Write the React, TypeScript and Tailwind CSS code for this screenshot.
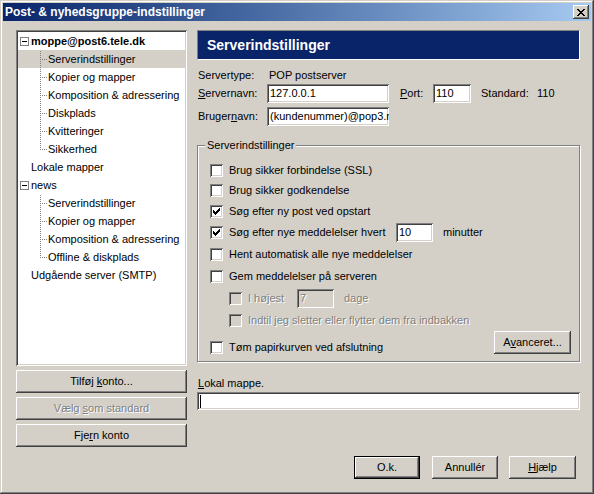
import React from "react";

const raised =
  "bg-[#D4D0C8] shadow-[inset_-1px_-1px_#404040,inset_1px_1px_#ffffff,inset_-2px_-2px_#808080]";
const sunken =
  "shadow-[inset_1px_1px_#808080,inset_-1px_-1px_#ffffff,inset_2px_2px_#404040,inset_-2px_-2px_#D4D0C8]";
const disabledText = "text-[#808080] [text-shadow:1px_1px_0_#ffffff]";

function CloseGlyph() {
  const px: [number, number, number][] = [
    [0, 0, 2], [6, 0, 2],
    [1, 1, 2], [5, 1, 2],
    [2, 2, 4],
    [3, 3, 2],
    [2, 4, 4],
    [1, 5, 2], [5, 5, 2],
    [0, 6, 2], [6, 6, 2],
  ];
  return (
    <svg width="8" height="7" viewBox="0 0 8 7" shapeRendering="crispEdges" fill="#000">
      {px.map(([x, y, w], i) => (
        <rect key={i} x={x} y={y} width={w} height={1} />
      ))}
    </svg>
  );
}

function CheckMark({ color = "#000" }: { color?: string }) {
  const cols = [2, 3, 4, 3, 2, 1, 0];
  return (
    <svg width="7" height="7" viewBox="0 0 7 7" shapeRendering="crispEdges" fill={color}>
      {cols.map((y, x) => (
        <rect key={x} x={x} y={y} width={1} height={3} />
      ))}
    </svg>
  );
}

function Check({ checked, disabled }: { checked?: boolean; disabled?: boolean }) {
  return (
    <span
      className={`w-[13px] h-[13px] shrink-0 flex items-center justify-center ${sunken} ${
        disabled ? "bg-[#D4D0C8]" : "bg-white"
      }`}
    >
      {checked && <CheckMark />}
    </span>
  );
}

function Minus() {
  return (
    <span className="w-[9px] h-[9px] shrink-0 border border-[#808080] bg-white flex items-center justify-center">
      <span className="w-[5px] h-[1px] bg-black" />
    </span>
  );
}

function Conn({ last }: { last?: boolean }) {
  const rects: React.ReactNode[] = [];
  for (let y = 1; y < (last ? 10 : 18); y += 2)
    rects.push(<rect key={"v" + y} x={0} y={y} width={1} height={1} />);
  for (let x = 2; x < 7; x += 2)
    rects.push(<rect key={"h" + x} x={x} y={9} width={1} height={1} />);
  return (
    <svg width="7" height="18" viewBox="0 0 7 18" className="shrink-0" fill="#808080" shapeRendering="crispEdges">
      {rects}
    </svg>
  );
}

function Child({ label, last, selected }: { label: string; last?: boolean; selected?: boolean }) {
  return (
    <div className={`h-[18px] flex items-center pl-[22px] ${selected ? "bg-[#D4D0C8]" : ""}`}>
      <Conn last={last} />
      <span className="ml-[1px] whitespace-nowrap">{label}</span>
    </div>
  );
}

function Root({ label, bold, box }: { label: string; bold?: boolean; box?: boolean }) {
  return (
    <div className={`h-[18px] flex items-center ${box ? "pl-[2px]" : "pl-[13px]"}`}>
      {box && <Minus />}
      <span className={`${box ? "ml-[2px]" : ""} whitespace-nowrap ${bold ? "font-bold" : ""}`}>{label}</span>
    </div>
  );
}

function Btn({ children, className = "" }: { children: React.ReactNode; className?: string }) {
  return (
    <div className={`h-[23px] flex items-center justify-center whitespace-nowrap ${raised} ${className}`}>
      {children}
    </div>
  );
}

function Field({ children, className = "", disabled }: { children?: React.ReactNode; className?: string; disabled?: boolean }) {
  return (
    <div
      className={`h-[19px] flex items-center pl-[3px] overflow-hidden whitespace-nowrap ${sunken} ${
        disabled ? `bg-[#D4D0C8] ${disabledText}` : "bg-white"
      } ${className}`}
    >
      {children}
    </div>
  );
}

function CbRow({ label, checked, h }: { label: string; checked?: boolean; h: string }) {
  return (
    <div className={`flex items-center pl-[12px] ${h}`}>
      <Check checked={checked} />
      <span className="ml-[6px] whitespace-nowrap">{label}</span>
    </div>
  );
}

export default function App() {
  return (
    <div
      className={`w-[594px] h-[494px] bg-[#D4D0C8] p-[3px] flex flex-col text-[11px] leading-[13px] text-black font-['Liberation_Sans',Arial,sans-serif] shadow-[inset_-1px_-1px_#404040,inset_1px_1px_#D4D0C8,inset_-2px_-2px_#808080,inset_2px_2px_#ffffff]`}
    >
      {/* Title bar */}
      <div className="h-[18px] shrink-0 flex items-center bg-linear-to-r from-[#0A246A] to-[#A6CAF0] pl-[2px] pr-[2px]">
        <span className="flex-1 font-bold text-white text-[12px] whitespace-nowrap">Post- &amp; nyhedsgruppe-indstillinger</span>
        <div className={`w-[16px] h-[14px] flex items-center justify-center ${raised}`}>
          <CloseGlyph />
        </div>
      </div>

      {/* Main */}
      <div className="flex pt-[9px] pl-[13px] pr-[11px]">
        {/* Left column */}
        <div className="w-[171px] flex flex-col gap-[4px] shrink-0">
          <div className={`h-[336px] bg-white p-[2px] flex flex-col ${sunken}`}>
            <Root label="moppe@post6.tele.dk" bold box />
            <Child label="Serverindstillinger" selected />
            <Child label="Kopier og mapper" />
            <Child label="Komposition & adressering" />
            <Child label="Diskplads" />
            <Child label="Kvitteringer" />
            <Child label="Sikkerhed" last />
            <Root label="Lokale mapper" />
            <Root label="news" box />
            <Child label="Serverindstillinger" />
            <Child label="Kopier og mapper" />
            <Child label="Komposition & adressering" />
            <Child label="Offline & diskplads" last />
            <Root label="Udgående server (SMTP)" />
          </div>
          <Btn>
            <span>
              Tilføj <u>k</u>onto...
            </span>
          </Btn>
          <Btn>
            <span className={disabledText}>
              Vælg <u>s</u>om standard
            </span>
          </Btn>
          <Btn>
            <span>
              Fje<u>r</u>n konto
            </span>
          </Btn>
        </div>

        {/* Right column */}
        <div className="ml-[10px] w-[383px] flex flex-col shrink-0">
          <div className="h-[30px] bg-[#0A246A] border border-t-[#808080] border-l-[#808080] border-r-white border-b-white flex items-center pl-[9px]">
            <span className="text-white font-bold text-[14px] leading-none">Serverindstillinger</span>
          </div>

          <div className="mt-[8px] h-[14px] flex items-center">
            <span className="w-[72px] pl-[1px]">Servertype:</span>
            <span>POP postserver</span>
          </div>

          <div className="mt-[2px] h-[19px] flex items-center">
            <span className="w-[70px] pl-[1px]">
              <u>S</u>ervernavn:
            </span>
            <Field className="w-[122px]">127.0.0.1</Field>
            <span className="ml-[11px] w-[33px]">
              <u>P</u>ort:
            </span>
            <Field className="w-[38px]">110</Field>
            <span className="ml-[10px] w-[56px]">Standard:</span>
            <span>110</span>
          </div>

          <div className="mt-[4px] h-[19px] flex items-center">
            <span className="w-[70px] pl-[1px]">
              Bruger<u>n</u>avn:
            </span>
            <Field className="w-[122px]">(kundenummer)@pop3.net</Field>
          </div>

          <fieldset className="mt-[12px] border border-[#808080] shadow-[inset_1px_1px_#ffffff,1px_1px_#ffffff] px-0 pt-[8px] pb-[7px] m-0 min-w-0">
            <legend className="ml-[7px] px-[2px] bg-[#D4D0C8] h-[14px] leading-[14px]">Serverindstillinger</legend>
            <CbRow h="h-[20px]" label="Brug sikker forbindelse (SSL)" />
            <CbRow h="h-[21px]" label="Brug sikker godkendelse" />
            <CbRow h="h-[20px]" label="Søg efter ny post ved opstart" checked />
            <div className="h-[23px] flex items-center pl-[12px]">
              <Check checked />
              <span className="ml-[6px] w-[167px] whitespace-nowrap">Søg efter nye meddelelser hvert</span>
              <Field className="w-[37px]">10</Field>
              <span className="ml-[10px]">minutter</span>
            </div>
            <CbRow h="h-[21px]" label="Hent automatisk alle nye meddelelser" />
            <CbRow h="h-[22px]" label="Gem meddelelser på serveren" />
            <div className="h-[22px] flex items-center pl-[31px]">
              <Check disabled />
              <span className={`ml-[6px] w-[49px] ${disabledText}`}>I højest</span>
              <Field className="w-[37px]" disabled>
                7
              </Field>
              <span className={`ml-[10px] ${disabledText}`}>dage</span>
            </div>
            <div className="h-[22px] flex items-center pl-[31px]">
              <Check disabled />
              <span className={`ml-[6px] whitespace-nowrap ${disabledText}`}>
                Indtil jeg sletter eller flytter dem fra indbakken
              </span>
            </div>
            <div className="h-[23px] flex items-end justify-between pl-[12px] pr-[8px]">
              <div className="h-[13px] flex items-center">
                <Check />
                <span className="ml-[6px] whitespace-nowrap">Tøm papirkurven ved afslutning</span>
              </div>
              <Btn className="w-[77px]">
                <span>
                  A<u>v</u>anceret...
                </span>
              </Btn>
            </div>
          </fieldset>

          <div className="mt-[14px] h-[14px] flex items-center pl-[1px]">
            <span>
              <u>L</u>okal mappe.
            </span>
          </div>
          <div className={`mt-[2px] h-[18px] bg-white flex items-center pl-[3px] ${sunken}`}>
            <span className="w-[1px] h-[13px] bg-black" />
          </div>
        </div>
      </div>

      {/* Bottom buttons */}
      <div className="mt-[9px] flex justify-end pr-[15px]">
        <div className="w-[66px] h-[23px] border border-black">
          <div className={`w-full h-full flex items-center justify-center ${raised}`}>O.k.</div>
        </div>
        <Btn className="ml-[12px] w-[66px]">Annullér</Btn>
        <Btn className="ml-[11px] w-[67px]">
          <span>
            <u>H</u>jælp
          </span>
        </Btn>
      </div>
    </div>
  );
}
